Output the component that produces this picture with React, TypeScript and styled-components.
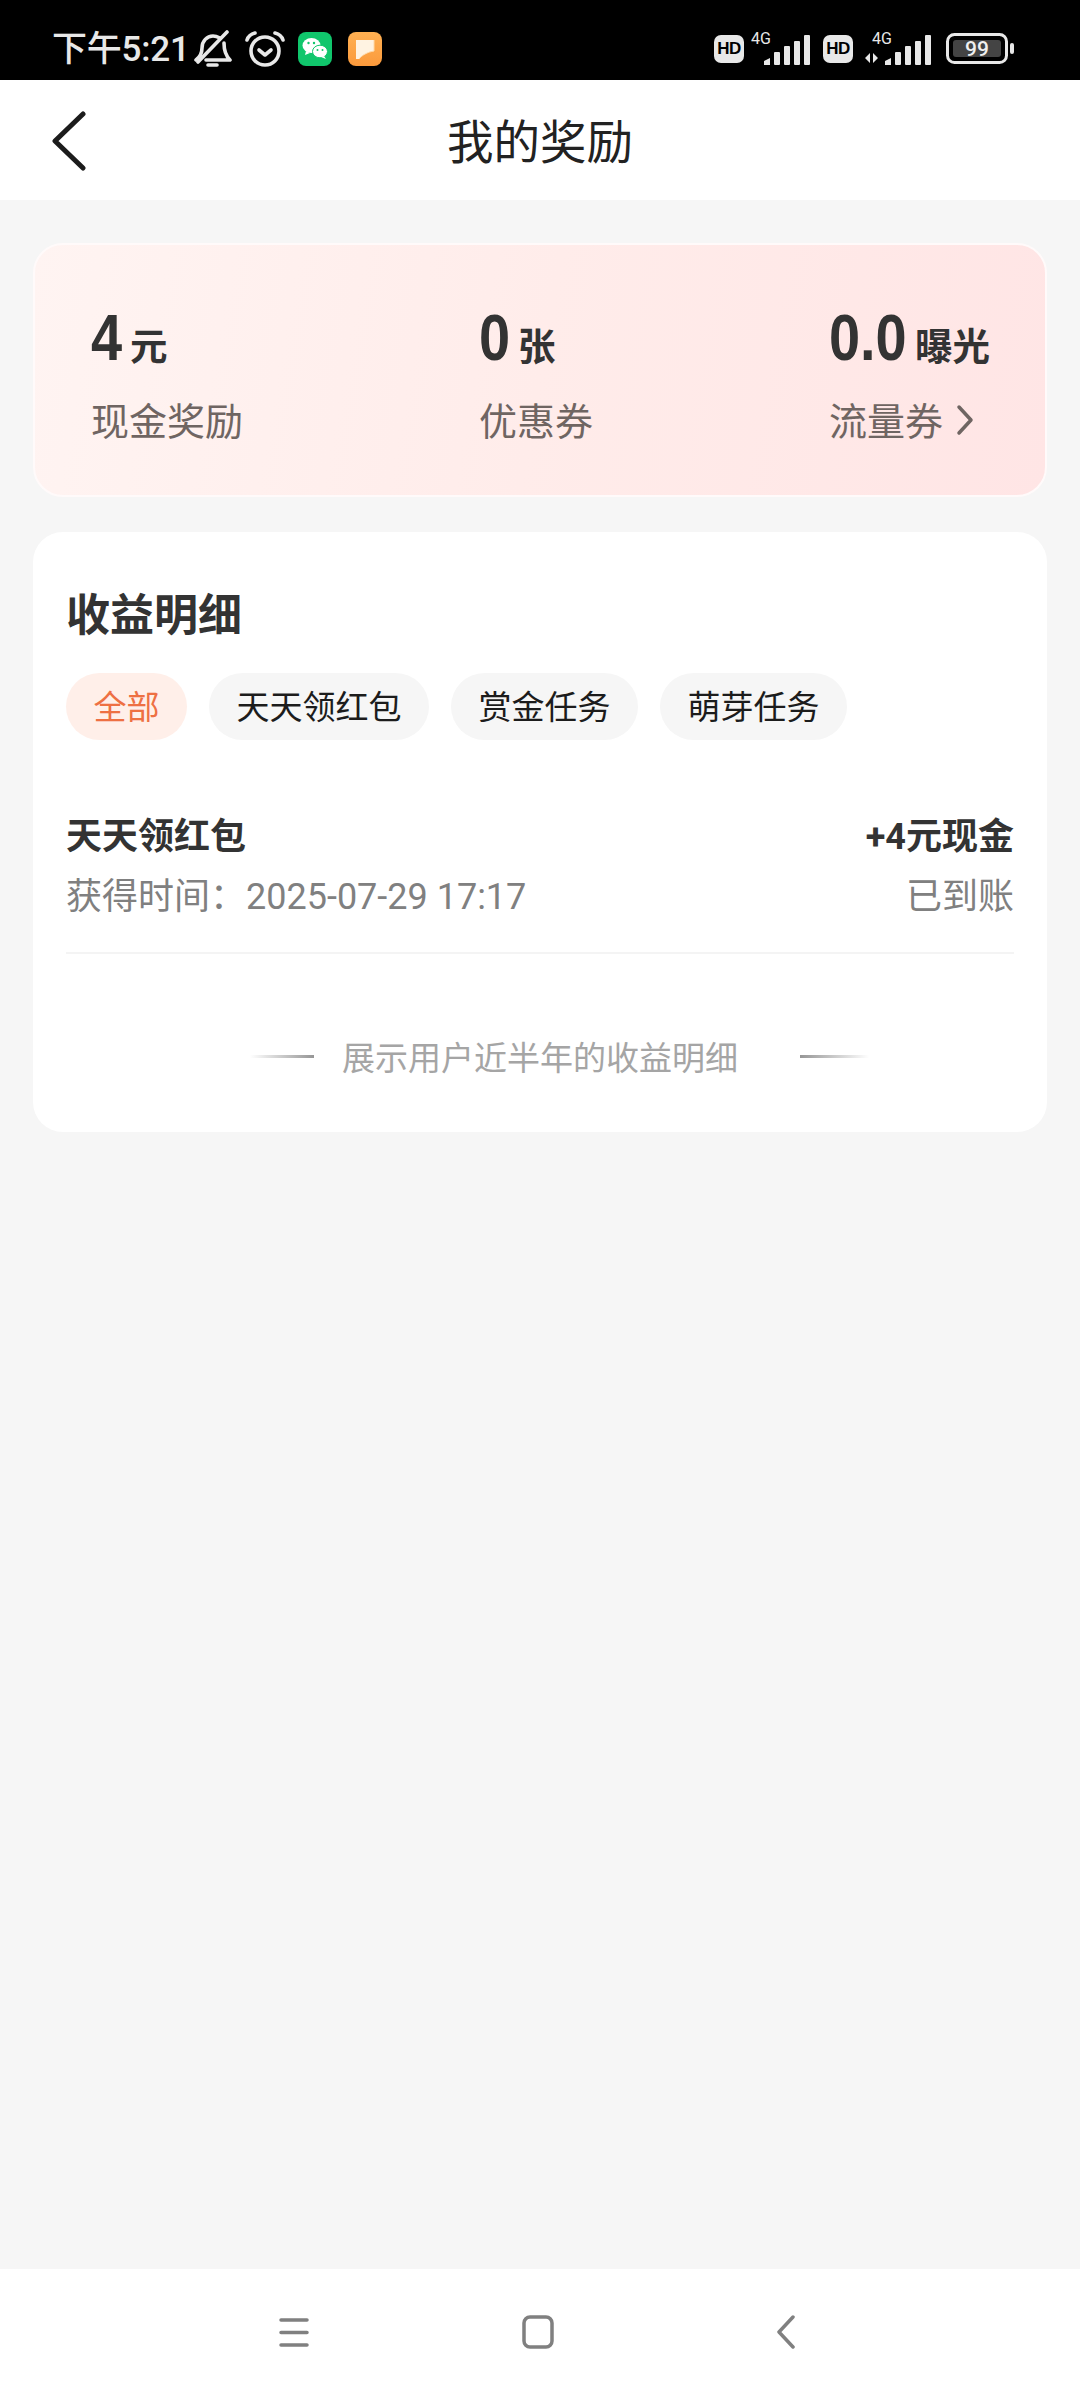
import React from 'react'
import styled, { createGlobalStyle } from 'styled-components'

const GlobalStyle = createGlobalStyle`
  html, body {
    margin: 0;
    padding: 0;
    background: #f6f6f6;
    font-family: Roboto, "Noto Sans CJK SC", sans-serif;
  }
  * { box-sizing: border-box; }
`

const Page = styled.div`
  width: 1080px;
  height: 2400px;
  display: flex;
  flex-direction: column;
  background: #f6f6f6;
`

const StatusBar = styled.div`
  height: 80px;
  flex: none;
  background: #000;
  color: #e8e8e8;
  display: flex;
  align-items: center;
  justify-content: space-between;
  padding: 18px 66px 0 52px;
`

const StatusGroup = styled.div`
  display: flex;
  align-items: center;
`

const Clock = styled.span`
  font-size: 35px;
  line-height: 40px;
  font-weight: 500;
  margin-right: 4px;
  margin-top: 2px;
  letter-spacing: -0.2px;
`

const HdBadge = styled.span`
  width: 30px;
  height: 28px;
  border-radius: 7px;
  background: #e8e8e8;
  color: #000;
  font: 700 17px/28px "Liberation Sans", sans-serif;
  text-align: center;
  letter-spacing: -0.5px;
`

const SimGap = styled.span`
  width: 12px;
`

const Header = styled.div`
  height: 120px;
  flex: none;
  background: #fff;
  display: flex;
  align-items: center;
  justify-content: center;
  position: relative;
`

const BackButton = styled.div`
  position: absolute;
  left: 51px;
  top: 31px;
  display: flex;
`

const Title = styled.div`
  font-size: 46.5px;
  line-height: 60px;
  color: #222;
  margin-top: 6px;
`

const Main = styled.div`
  flex: 1;
  padding: 43px 33px 0;
  display: flex;
  flex-direction: column;
  gap: 35px;
`

const SummaryCard = styled.div`
  height: 254px;
  border: 2px solid #fffafa;
  border-radius: 30px;
  background: linear-gradient(100deg, #fff4f2 0%, #ffecea 50%, #ffe5e5 100%);
  padding: 60px 55px 0 56px;
  display: flex;
  justify-content: space-between;
`

const Stat = styled.div`
  display: flex;
  flex-direction: column;
`

const StatValue = styled.div`
  display: flex;
  align-items: baseline;
  height: 66px;
  color: #333;
`

// no condensed face is installed, so the digits are squeezed by hand
const Digits = styled.span<{ $width: number }>`
  display: inline-block;
  width: ${({ $width }) => $width}px;
  font: 700 65px/66px "Liberation Sans", sans-serif;
  transform: scaleX(0.86);
  transform-origin: left center;
  white-space: nowrap;
`

const Unit = styled.span`
  font-size: 37.5px;
  line-height: 66px;
  font-weight: 700;
  margin-left: 8px;
`

const StatLabel = styled.div`
  display: flex;
  align-items: center;
  margin-top: 26px;
  font-size: 38px;
  line-height: 50px;
  color: #6f6562;
`

const LabelArrow = styled.svg`
  width: 20px;
  height: 32px;
  margin-left: 12px;
  margin-top: -4px;
`

const DetailCard = styled.div`
  height: 600px;
  background: #fff;
  border-radius: 30px;
  padding: 54px 33px 0;
  display: flex;
  flex-direction: column;
`

const SectionTitle = styled.div`
  font-size: 44px;
  line-height: 60px;
  font-weight: 700;
  color: #333;
`

const Tabs = styled.div`
  display: flex;
  gap: 22px;
  margin-top: 27px;
`

const Tab = styled.div<{ $active?: boolean }>`
  height: 67px;
  padding: 0 27.5px;
  border-radius: 34px;
  font-size: 33px;
  line-height: 70px;
  background: ${({ $active }) => ($active ? '#ffefe9' : '#f6f6f6')};
  color: ${({ $active }) => ($active ? '#ee7043' : '#1c1c1c')};
`

const Row = styled.div`
  margin-top: 73px;
  padding-bottom: 31px;
  border-bottom: 2px solid #f4f4f4;
  display: flex;
  justify-content: space-between;
`

const RowSide = styled.div<{ $right?: boolean }>`
  display: flex;
  flex-direction: column;
  gap: 12px;
  align-items: ${({ $right }) => ($right ? 'flex-end' : 'flex-start')};
`

const RowTitle = styled.div`
  font-size: 36px;
  line-height: 48px;
  font-weight: 700;
  color: #333;
`

const RowMeta = styled.div`
  font-size: 36px;
  line-height: 48px;
  color: #808080;
`

const Footnote = styled.div`
  display: grid;
  grid-template-columns: 1fr auto 1fr;
  align-items: center;
  margin-top: 83px;
  font-size: 33px;
  line-height: 44px;
  color: #a5a5a5;
`

const FootLine = styled.div<{ $side: 'left' | 'right' }>`
  height: 3px;
  margin-top: -6px;
  background: linear-gradient(
    ${({ $side }) => ($side === 'left' ? 'to right' : 'to left')},
    rgba(150, 150, 150, 0),
    #969696
  );
  ${({ $side }) =>
    $side === 'left'
      ? 'width: 64px; justify-self: end; margin-right: 28px;'
      : 'width: 69px; justify-self: start; margin-left: 62px;'}
`

const NavBar = styled.div`
  height: 131px;
  flex: none;
  background: #fff;
  display: flex;
  align-items: center;
  padding: 0 0 6px 279px;
`

const NavIcon = styled.svg<{ $gap?: number }>`
  margin-left: ${({ $gap }) => $gap ?? 0}px;
  color: #808080;
  flex: none;
`

const BellOff = () => (
  <svg width="38" height="38" viewBox="0 0 38 38" fill="none" stroke="#e8e8e8" strokeWidth="3.6" strokeLinecap="round" strokeLinejoin="round">
    <path d="M2 30c4-3 6-6 6-12 0-7 5-12 11-12 3 0 5 1 7 2" />
    <path d="M30 13c0 7 2 13 6 17H12" />
    <path d="M4 32L33 2" />
    <path d="M14 35h9" />
  </svg>
)

const Alarm = () => (
  <svg width="40" height="38" viewBox="0 0 40 38" fill="none" stroke="#e8e8e8" strokeWidth="3.6" strokeLinecap="round" strokeLinejoin="round" style={{ marginLeft: 13 }}>
    <circle cx="20" cy="21" r="14" />
    <path d="M14 20l6 5 6-5" />
    <path d="M2 10c1-3 4-6 8-7" />
    <path d="M38 10c-1-3-4-6-8-7" />
  </svg>
)

const WeChat = () => (
  <svg width="34" height="34" viewBox="0 0 34 34" style={{ marginLeft: 13 }}>
    <rect width="34" height="34" rx="8" fill="#10c66c" />
    <ellipse cx="13.5" cy="13.5" rx="9" ry="7.5" fill="#fff" />
    <path d="M8 19l-1 4 5-2z" fill="#fff" />
    <ellipse cx="22" cy="19.5" rx="7.5" ry="6.3" fill="#fff" stroke="#10c66c" strokeWidth="1" />
    <path d="M26 24l2 3-5-2z" fill="#fff" />
    <circle cx="10.5" cy="11" r="1.2" fill="#10c66c" />
    <circle cx="16" cy="11" r="1.2" fill="#10c66c" />
    <circle cx="19.5" cy="18" r="1" fill="#10c66c" />
    <circle cx="24.5" cy="18" r="1" fill="#10c66c" />
  </svg>
)

const NoteApp = () => (
  <svg width="34" height="34" viewBox="0 0 34 34" style={{ marginLeft: 16 }}>
    <defs>
      <linearGradient id="noteBg" x1="0" y1="0" x2="0" y2="1">
        <stop offset="0" stopColor="#ffb052" />
        <stop offset="1" stopColor="#fb9a3c" />
      </linearGradient>
    </defs>
    <rect width="34" height="34" rx="8" fill="url(#noteBg)" />
    <path d="M8 8h18v11c-6 1-12 4-15 8H8z" fill="#fff3e2" />
    <path d="M26 8v11c-6 1-12 4-15 8" fill="none" stroke="#ffd9a8" strokeWidth="1" />
  </svg>
)

// bars grow left to right, the arrows only show on the second sim
const Signal = ({ arrows }: { arrows?: boolean }) => (
  <svg width={arrows ? 68 : 60} height="40" viewBox={arrows ? '0 0 68 40' : '0 0 60 40'} style={{ marginLeft: arrows ? 10 : 7 }}>
    <g transform={arrows ? 'translate(21 0)' : 'translate(12 0)'} fill="#e8e8e8">
      <path d="M1 36v-4l6-3v7z" />
      <rect x="11" y="23" width="6" height="13" rx="1" />
      <rect x="21" y="17" width="6" height="19" rx="1" />
      <rect x="31" y="12" width="6" height="24" rx="1" />
      <rect x="41" y="6" width="6" height="30" rx="1" />
    </g>
    {arrows && <path d="M7 24v10l-5-5zM10 34V24l5 5z" fill="#e8e8e8" />}
    <text x={arrows ? 9 : 0} y="15" fontSize="16" fontFamily="Roboto, sans-serif" fill="#e8e8e8">
      4G
    </text>
  </svg>
)

const Battery = () => (
  <svg width="68" height="32" viewBox="0 0 68 32" style={{ marginLeft: 15 }}>
    <rect x="1.5" y="1.5" width="59" height="28" rx="7" fill="none" stroke="#e8e8e8" strokeWidth="3" />
    <rect x="7" y="7" width="48" height="17" rx="3" fill="#444" />
    <rect x="64" y="10" width="4" height="11" rx="2" fill="#e8e8e8" />
    <text x="31" y="23" textAnchor="middle" fontSize="21" fontWeight="500" fontFamily="Roboto, sans-serif" fill="#f0f0f0">
      99
    </text>
  </svg>
)

export default function App() {
  return (
    <Page>
      <GlobalStyle />
      <StatusBar>
        <StatusGroup>
          <Clock>下午5:21</Clock>
          <BellOff />
          <Alarm />
          <WeChat />
          <NoteApp />
        </StatusGroup>
        <StatusGroup>
          <HdBadge>HD</HdBadge>
          <Signal />
          <SimGap />
          <HdBadge>HD</HdBadge>
          <Signal arrows />
          <Battery />
        </StatusGroup>
      </StatusBar>

      <Header>
        <BackButton>
          <svg width="36" height="60" viewBox="0 0 36 60" fill="none" stroke="#1c1c1c" strokeWidth="5" strokeLinecap="round" strokeLinejoin="round">
            <path d="M32 3L4 30l28 27" />
          </svg>
        </BackButton>
        <Title>我的奖励</Title>
      </Header>

      <Main>
        <SummaryCard>
          <Stat>
            <StatValue>
              <Digits $width={31}>4</Digits>
              <Unit>元</Unit>
            </StatValue>
            <StatLabel>现金奖励</StatLabel>
          </Stat>
          <Stat>
            <StatValue>
              <Digits $width={31}>0</Digits>
              <Unit>张</Unit>
            </StatValue>
            <StatLabel>优惠券</StatLabel>
          </Stat>
          <Stat>
            <StatValue>
              <Digits $width={78}>0.0</Digits>
              <Unit>曝光</Unit>
            </StatValue>
            <StatLabel>
              流量券
              <LabelArrow viewBox="0 0 20 32" fill="none" stroke="#6f6562" strokeWidth="3.5" strokeLinecap="round" strokeLinejoin="round">
                <path d="M4 3l12 13L4 29" />
              </LabelArrow>
            </StatLabel>
          </Stat>
        </SummaryCard>

        <DetailCard>
          <SectionTitle>收益明细</SectionTitle>
          <Tabs>
            <Tab $active>全部</Tab>
            <Tab>天天领红包</Tab>
            <Tab>赏金任务</Tab>
            <Tab>萌芽任务</Tab>
          </Tabs>
          <Row>
            <RowSide>
              <RowTitle>天天领红包</RowTitle>
              <RowMeta>获得时间：2025-07-29 17:17</RowMeta>
            </RowSide>
            <RowSide $right>
              <RowTitle>+4元现金</RowTitle>
              <RowMeta>已到账</RowMeta>
            </RowSide>
          </Row>
          <Footnote>
            <FootLine $side="left" />
            <span>展示用户近半年的收益明细</span>
            <FootLine $side="right" />
          </Footnote>
        </DetailCard>
      </Main>

      <NavBar>
        <NavIcon width="30" height="30" viewBox="0 0 30 30" stroke="currentColor" strokeWidth="3.5" strokeLinecap="round">
          <path d="M2 3h26M2 15.5h26M2 28h26" />
        </NavIcon>
        <NavIcon $gap={213} width="32" height="34" viewBox="0 0 32 34" fill="none" stroke="currentColor" strokeWidth="3.5">
          <rect x="2" y="2" width="28" height="30" rx="6" />
        </NavIcon>
        <NavIcon $gap={223} width="18" height="34" viewBox="0 0 18 34" fill="none" stroke="currentColor" strokeWidth="3.5" strokeLinecap="round" strokeLinejoin="round">
          <path d="M16 2L2 17l14 15" />
        </NavIcon>
      </NavBar>
    </Page>
  )
}
